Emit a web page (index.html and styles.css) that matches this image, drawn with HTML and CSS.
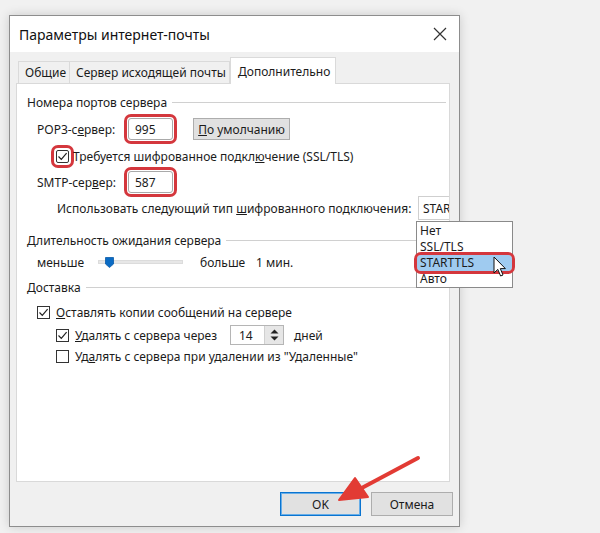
FILE: index.html
```html
<!DOCTYPE html>
<html lang="ru">
<head>
<meta charset="utf-8">
<title>Параметры интернет-почты</title>
<link rel="stylesheet" href="styles.css">
</head>
<body>
<div class="dialog">
  <div class="titlebar">
    <span class="title">Параметры интернет-почты</span>
    <svg class="close" width="14" height="14" viewBox="0 0 14 14"><path d="M1 1 L13 13 M13 1 L1 13" stroke="#333" stroke-width="1.2" fill="none"/></svg>
  </div>
  <div class="tabs">
    <div class="tab t1">Общие</div>
    <div class="tab t2">Сервер исходящей почты</div>
    <div class="tab t3 active">Дополнительно</div>
  </div>
  <div class="panel">
    <div class="group-head"><span>Номера портов сервера</span><i class="rule"></i></div>
    <div class="row r-pop">
      <span class="lbl">POP3-с<u>е</u>рвер:</span>
      <span class="input port mark">995</span>
      <span class="btn btn-default"><u>П</u>о умолчанию</span>
    </div>
    <div class="row r-ssl">
      <span class="check mark-sm"><svg width="11" height="11" viewBox="0 0 11 11"><path d="M1.5 5.5 L4.3 8.4 L9.6 2.2" stroke="#222" stroke-width="1.2" fill="none"/></svg></span>
      <span class="check-lbl">Требуется шифрованное подкл<u>ю</u>чение (SSL/TLS)</span>
    </div>
    <div class="row r-smtp">
      <span class="lbl">SMTP-сер<u>в</u>ер:</span>
      <span class="input port mark">587</span>
    </div>
    <div class="row r-use">
      <span class="use-lbl">Использовать следующий тип <u>ш</u>ифрованного подключения:</span>
      <span class="select">STARTTLS</span>
    </div>
    <div class="group-head g2"><span>Длительность ожидания сервера</span><i class="rule"></i></div>
    <div class="row r-slider">
      <span class="s-lbl">меньше</span>
      <span class="track"><svg width="9" height="11" viewBox="0 0 9 11"><path d="M0.5 0.5 H8.5 V7 L4.5 10.5 L0.5 7 Z" fill="#0a6bc4" stroke="#0a5aa8" stroke-width="0.8"/></svg></span>
      <span class="s-more">больше</span>
      <span>1 мин.</span>
    </div>
    <div class="group-head g3"><span>Доставка</span><i class="rule"></i></div>
    <div class="row r-keep">
      <span class="check"><svg width="11" height="11" viewBox="0 0 11 11"><path d="M1.5 5.5 L4.3 8.4 L9.6 2.2" stroke="#222" stroke-width="1.2" fill="none"/></svg></span>
      <span class="check-lbl2"><u>О</u>ставлять копии сообщений на сервере</span>
    </div>
    <div class="row r-del">
      <span class="check"><svg width="11" height="11" viewBox="0 0 11 11"><path d="M1.5 5.5 L4.3 8.4 L9.6 2.2" stroke="#222" stroke-width="1.2" fill="none"/></svg></span>
      <span class="check-lbl2 del-lbl"><u>У</u>далять с сервера через</span>
      <span class="spin">
        <span class="spin-val">14</span>
        <span class="spin-btns">
          <svg width="9" height="5" viewBox="0 0 9 5"><path d="M0.5 4.5 L4.5 0.5 L8.5 4.5 Z" fill="#222"/></svg>
          <svg width="9" height="5" viewBox="0 0 9 5"><path d="M0.5 0.5 L4.5 4.5 L8.5 0.5 Z" fill="#222"/></svg>
        </span>
      </span>
      <span class="days">дней</span>
    </div>
    <div class="row r-del2">
      <span class="check"></span>
      <span class="check-lbl2">Уд<u>а</u>лять с сервера при удалении из "Удаленные"</span>
    </div>
  </div>
  <div class="footer">
    <span class="btn btn-ok">OK</span>
    <span class="btn btn-cancel">Отмена</span>
  </div>

  <div class="dropdown">
    <div class="opt">Нет</div>
    <div class="opt">SSL/TLS</div>
    <div class="opt sel">STARTTLS</div>
    <div class="opt">Авто</div>
  </div>
  <svg class="cursor" width="14" height="22" viewBox="0 0 14 22"><path d="M1 1 L1 17 L4.8 13.4 L7.6 20 L10 19 L7.3 12.6 L12.4 12.6 Z" fill="#fff" stroke="#111" stroke-width="1" stroke-linejoin="round"/></svg>
</div>
<svg class="annot" width="600" height="533" viewBox="0 0 600 533">
  <line x1="418" y1="458" x2="358" y2="490" stroke="#e23b34" stroke-width="4" stroke-linecap="round"/>
  <path d="M339 500 L355 478 L368 497 Z" fill="#e23b34" stroke="#e23b34" stroke-width="2" stroke-linejoin="round"/>
</svg>
</body>
</html>
```
FILE: styles.css
```css
* { box-sizing: border-box; }
html, body { margin: 0; padding: 0; }
body {
  width: 600px;
  height: 533px;
  overflow: hidden;
  background: #f1f1f1;
  font-family: "Noto Sans", "Open Sans", sans-serif;
  font-size: 12px;
  color: #1b1b1b;
}
u { text-decoration: underline; text-underline-offset: 1px; }

.dialog {
  position: relative;
  margin: 15px 0 0 9px;
  width: 451px;
  height: 512px;
  border: 1px solid #8d8d8d;
  background: #f0f0f0;
  box-shadow: 0 0 10px rgba(0,0,0,0.16);
  display: flex;
  flex-direction: column;
}
.titlebar {
  height: 36px;
  flex: none;
  background: #fff;
  display: flex;
  align-items: center;
  justify-content: space-between;
  padding: 0 12px 0 9px;
}
.title { font-size: 14px; color: #111; }

.tabs {
  flex: none;
  height: 26px;
  margin-top: 5px;
  padding-left: 8px;
  display: flex;
  align-items: flex-end;
}
.tab {
  height: 22px;
  display: flex;
  align-items: center;
  padding: 0 6px;
  border: 1px solid #dadada;
  border-bottom: none;
  background: #f0f0f0;
  white-space: nowrap;
}
.t1 { width: 52px; }
.t2 { width: 160px; border-left: none; }
.tab.active {
  width: 106px;
  height: 27px;
  margin-bottom: -1px;
  background: #fff;
  position: relative;
  z-index: 1;
  padding-left: 7px;
  padding-top: 1px;
}

.panel {
  flex: none;
  height: 399px;
  margin: 0 9px 0 6px;
  background: #fff;
  border: 1px solid #d9d9d9;
  padding: 9px 3px 0 10px;
  overflow: hidden;
}
.group-head {
  height: 18px;
  display: flex;
  align-items: center;
}
.group-head .rule {
  flex: 1;
  height: 1px;
  background: #d0d0d0;
  margin-left: 5px;
  margin-top: 1px;
}
.g2 { margin-top: 11px; }
.g3 { margin-top: 7px; }

.row {
  display: flex;
  align-items: center;
  padding-left: 10px;
  white-space: nowrap;
}
.lbl { width: 91px; }
.input {
  display: flex;
  align-items: center;
  height: 22px;
  border: 1px solid #a9a9a9;
  background: #fff;
  padding-left: 6px;
}
.port { width: 45px; }
.mark {
  outline: 3px solid #d4373d;
  outline-offset: 1px;
  border-radius: 3px;
}
.btn {
  display: flex;
  align-items: center;
  justify-content: center;
  background: #e1e1e1;
  border: 1px solid #adadad;
}
.btn-default { width: 97px; height: 22px; margin-left: 20px; }

.r-pop { height: 22px; margin-top: 7px; }
.r-ssl { height: 20px; margin-top: 6px; }
.r-smtp { height: 22px; margin-top: 5px; }
.r-use { height: 24px; margin-top: 3px; }

.check {
  flex: none;
  width: 13px;
  height: 13px;
  border: 1px solid #333;
  background: #fff;
  display: flex;
  align-items: center;
  justify-content: center;
}
.r-ssl .check { margin-left: 19px; }
.mark-sm {
  outline: 3px solid #d4373d;
  outline-offset: 2px;
  border-radius: 2px;
}
.check-lbl { margin-left: 4px; }
.check-lbl2 { margin-left: 6px; }

.use-lbl { flex: none; width: 381px; padding-left: 20px; }
.select {
  flex: none;
  width: 70px;
  height: 24px;
  border: 1px solid #cfcfcf;
  border-right: none;
  display: flex;
  align-items: center;
  padding-left: 4px;
  background: #fff;
}

.r-slider { height: 18px; margin-top: 4px; }
.s-lbl { width: 61px; }
.track {
  width: 85px;
  height: 4px;
  background: #e7e7e7;
  border: 1px solid #dcdcdc;
  display: flex;
  align-items: center;
  padding-left: 6px;
}
.track svg { flex: none; }
.s-more { margin-left: 17px; width: 56px; }

.r-keep { height: 20px; margin-top: 6px; }
.r-del { height: 20px; margin-top: 3px; }
.r-del2 { height: 20px; margin-top: 1px; }
.r-del .check, .r-del2 .check { margin-left: 19px; }
.del-lbl { width: 155px; }
.spin {
  display: flex;
  width: 54px;
  height: 20px;
  border: 1px solid #b5b5b5;
  background: #fff;
}
.spin-val { flex: 1; display: flex; align-items: center; padding-left: 8px; }
.spin-btns {
  width: 19px;
  background: #e6e6e6;
  border-left: 1px solid #d0d0d0;
  display: flex;
  flex-direction: column;
  align-items: center;
  justify-content: center;
  gap: 2px;
}
.days { margin-left: 10px; }

.footer {
  flex: none;
  display: flex;
  justify-content: flex-end;
  gap: 10px;
  padding: 10px 6px 0 0;
}
.btn-ok {
  width: 81px;
  height: 24px;
  border: 1px solid #0a74d0;
  box-shadow: inset 0 0 0 1px #68aee8;
}
.btn-cancel { width: 82px; height: 24px; }

.dropdown {
  position: absolute;
  left: 406px;
  top: 205px;
  width: 97px;
  height: 67px;
  background: #fff;
  border: 1px solid #8a8a8a;
  padding-top: 1px;
  z-index: 5;
}
.opt {
  height: 16px;
  line-height: 16px;
  padding-left: 3px;
}
.opt.sel {
  background: #9fcbf0;
  outline: 3px solid #d4373d;
  outline-offset: 0;
  border-radius: 4px;
}
.cursor {
  position: absolute;
  left: 483px;
  top: 240px;
  z-index: 6;
}
.annot {
  position: absolute;
  left: 0;
  top: 0;
  pointer-events: none;
  z-index: 10;
}
```
